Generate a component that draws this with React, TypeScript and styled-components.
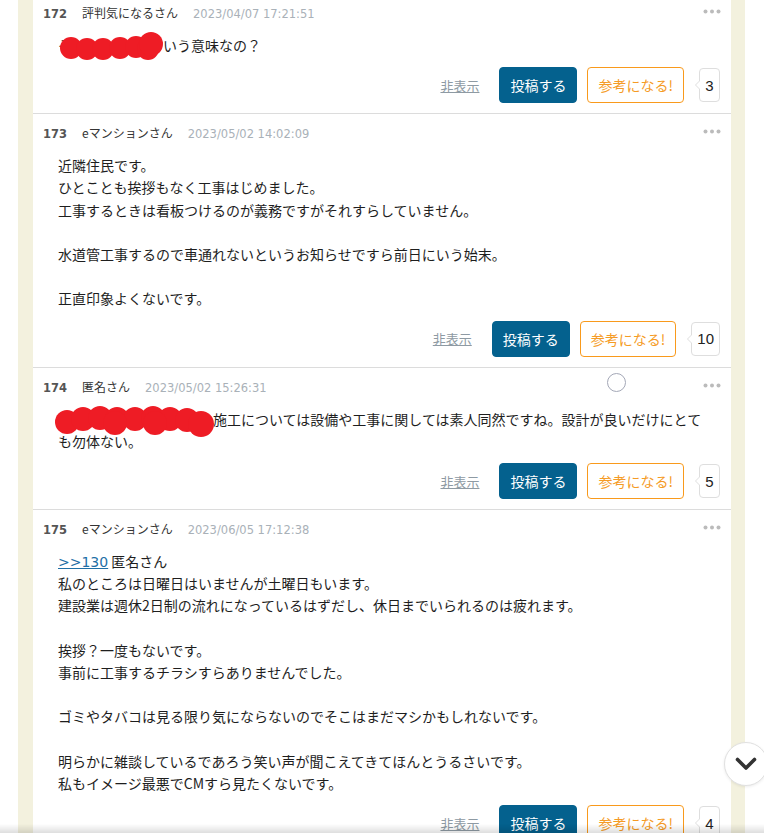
import React from "react"
import styled, { createGlobalStyle } from "styled-components"

const GlobalStyle = createGlobalStyle`
  html, body {
    margin: 0;
    padding: 0;
    overflow: hidden;
    background: #fff;
  }
  body {
    font-family: "Noto Sans CJK JP", "Noto Sans", sans-serif;
    color: #1e1e1e;
  }
`

const Board = styled.div`
  box-sizing: border-box;
  width: 727px;
  margin: -6px 0 0 18px;
  padding: 0 14px 0 15px;
  background: #f3f1de;
`

const List = styled.div`
  background: #fff;
`

const Post = styled.article`
  position: relative;
  padding: 10px 11px 10px 10px;
  border-bottom: 1px solid #dcdcdc;
`

const Head = styled.header`
  display: flex;
  align-items: baseline;
  gap: 15px;
  height: 18px;
  line-height: 18px;
`

const Num = styled.span`
  font-family: "DejaVu Sans", sans-serif;
  font-weight: bold;
  font-size: 11.5px;
  color: #555;
`

const Name = styled.span`
  font-size: 12px;
  color: #333;
`

const Date = styled.span`
  font-family: "DejaVu Sans", sans-serif;
  font-size: 11.5px;
  color: #a9b1b8;
`

const More = styled.svg`
  position: absolute;
  top: 15px;
  right: 10px;
`

const Body = styled.div`
  position: relative;
  margin: 12px 14px 0 15px;
  font-size: 14px;
  line-height: 22.2px;
  white-space: pre-line;
`

const Gap = styled.span<{ $w: number }>`
  display: inline-block;
  width: ${(p) => p.$w}px;
`

const Scribble = styled.svg<{ $x: number; $y: number }>`
  position: absolute;
  left: ${(p) => p.$x}px;
  top: ${(p) => p.$y}px;
`

const Anchor = styled.a`
  font-family: "DejaVu Sans", sans-serif;
  font-size: 14px;
  line-height: 1;
  color: #1f6fa6;
  text-decoration: underline;
`

const Actions = styled.div`
  display: flex;
  align-items: center;
  justify-content: flex-end;
  margin-top: 11px;
`

const Hide = styled.a`
  font-size: 13px;
  color: #8e9aa3;
  text-decoration: underline;
  margin-right: 20px;
`

const Button = styled.button<{ $outline?: boolean }>`
  box-sizing: border-box;
  height: 36px;
  padding: 0 10px;
  border-radius: 4px;
  font-family: "Noto Sans CJK JP", sans-serif;
  font-size: 14px;
  border: 1px solid ${(p) => (p.$outline ? "#f99a1c" : "#04618e")};
  background: ${(p) => (p.$outline ? "#fff" : "#04618e")};
  color: ${(p) => (p.$outline ? "#f59b25" : "#fff")};
  & + & {
    margin-left: 10px;
  }
`

const Count = styled.span`
  position: relative;
  box-sizing: border-box;
  min-width: 21px;
  height: 34px;
  margin-left: 15px;
  padding: 0 5px;
  display: flex;
  align-items: center;
  justify-content: center;
  border: 1px solid #dedede;
  border-radius: 4px;
  font-family: "Liberation Sans", sans-serif;
  font-size: 15px;
  color: #222;
  &::before,
  &::after {
    content: "";
    position: absolute;
    top: 50%;
    width: 0;
    height: 0;
    border-style: solid;
    border-color: transparent;
  }
  &::before {
    left: -5px;
    margin-top: -5px;
    border-width: 5px 5px 5px 0;
    border-right-color: #dedede;
  }
  &::after {
    left: -4px;
    margin-top: -4px;
    border-width: 4px 4px 4px 0;
    border-right-color: #fff;
  }
`

const ScrollDown = styled.button`
  position: fixed;
  left: 724px;
  top: 742px;
  width: 44px;
  height: 44px;
  padding: 0;
  border-radius: 50%;
  border: 1px solid #e0e0e0;
  background: #fff;
  display: flex;
  align-items: center;
  justify-content: center;
  box-shadow: 0 1px 3px rgba(0, 0, 0, 0.08);
  z-index: 3;
`

const Cursor = styled.div`
  position: fixed;
  left: 607px;
  top: 373px;
  width: 17px;
  height: 17px;
  border: 1.5px solid #a3a7b6;
  border-radius: 50%;
`

const Fade = styled.div`
  position: fixed;
  left: 0;
  right: 0;
  bottom: 0;
  height: 9px;
  background: linear-gradient(rgba(0, 0, 0, 0), rgba(0, 0, 0, 0.13));
  z-index: 2;
`

const RED = "#ee1c25"

const Blob = ({ x, y, w, h, dots }: { x: number; y: number; w: number; h: number; dots: number[][] }) => (
  <Scribble $x={x} $y={y} width={w} height={h} viewBox={`0 0 ${w} ${h}`}>
    {dots.map(([cx, cy, r], i) => (
      <circle key={i} cx={cx} cy={cy} r={r} fill={RED} />
    ))}
  </Scribble>
)

const MoreIcon = () => (
  <More width="18" height="5" viewBox="0 0 18 5">
    <circle cx="2.5" cy="2.5" r="2" fill="#bbb" />
    <circle cx="9" cy="2.5" r="2" fill="#bbb" />
    <circle cx="15.5" cy="2.5" r="2" fill="#bbb" />
  </More>
)

type Item = {
  no: number
  name: string
  date: string
  count: number
  body: React.ReactNode
}

const posts: Item[] = [
  {
    no: 172,
    name: "評判気になるさん",
    date: "2023/04/07 17:21:51",
    count: 3,
    body: (
      <>
        <Blob
          x={2}
          y={-3}
          w={104}
          h={30}
          dots={[
            [11, 17, 11],
            [27, 18, 11],
            [43, 18, 11],
            [60, 17, 11],
            [76, 16, 11],
            [88, 18, 11],
            [91, 13, 12],
          ]}
        />
        そ<Gap $w={91} />いう意味なの？
      </>
    ),
  },
  {
    no: 173,
    name: "eマンションさん",
    date: "2023/05/02 14:02:09",
    count: 10,
    body:
      "近隣住民です。\nひとことも挨拶もなく工事はじめました。\n工事するときは看板つけるのが義務ですがそれすらしていません。\n\n水道管工事するので車通れないというお知らせですら前日にいう始末。\n\n正直印象よくないです。",
  },
  {
    no: 174,
    name: "匿名さん",
    date: "2023/05/02 15:26:31",
    count: 5,
    body: (
      <>
        <Blob
          x={-3}
          y={-6}
          w={160}
          h={36}
          dots={[
            [12, 20, 12],
            [28, 17, 12],
            [45, 16, 12],
            [62, 17, 12],
            [80, 17, 12],
            [98, 16, 12],
            [115, 17, 12],
            [132, 18, 12],
            [146, 22, 13],
            [60, 21, 12],
            [100, 21, 12],
          ]}
        />
        <Gap $w={155} />
        施工については設備や工事に関しては素人同然ですね。設計が良いだけにとて
        {"\n"}も勿体ない。
      </>
    ),
  },
  {
    no: 175,
    name: "eマンションさん",
    date: "2023/06/05 17:12:38",
    count: 4,
    body: (
      <>
        <Anchor>&gt;&gt;130</Anchor> 匿名さん
        {
          "\n私のところは日曜日はいませんが土曜日もいます。\n建設業は週休2日制の流れになっているはずだし、休日までいられるのは疲れます。\n\n挨拶？一度もないです。\n事前に工事するチラシすらありませんでした。\n\nゴミやタバコは見る限り気にならないのでそこはまだマシかもしれないです。\n\n明らかに雑談しているであろう笑い声が聞こえてきてほんとうるさいです。\n私もイメージ最悪でCMすら見たくないです。"
        }
      </>
    ),
  },
]

const App = () => {
  return (
    <>
      <GlobalStyle />
      <Board>
        <List>
          {posts.map((p) => (
            <Post key={p.no}>
              <Head>
                <Num>{p.no}</Num>
                <Name>{p.name}</Name>
                <Date>{p.date}</Date>
              </Head>
              <MoreIcon />
              <Body>{p.body}</Body>
              <Actions>
                <Hide>非表示</Hide>
                <Button>投稿する</Button>
                <Button $outline>参考になる!</Button>
                <Count>{p.count}</Count>
              </Actions>
            </Post>
          ))}
        </List>
      </Board>
      <Cursor />
      <ScrollDown>
        <svg width="22" height="14" viewBox="0 0 22 14">
          <polyline
            points="2.5,2.5 11,11 19.5,2.5"
            fill="none"
            stroke="#333"
            strokeWidth="3.6"
            strokeLinecap="round"
            strokeLinejoin="round"
          />
        </svg>
      </ScrollDown>
      <Fade />
    </>
  )
}

export default App
